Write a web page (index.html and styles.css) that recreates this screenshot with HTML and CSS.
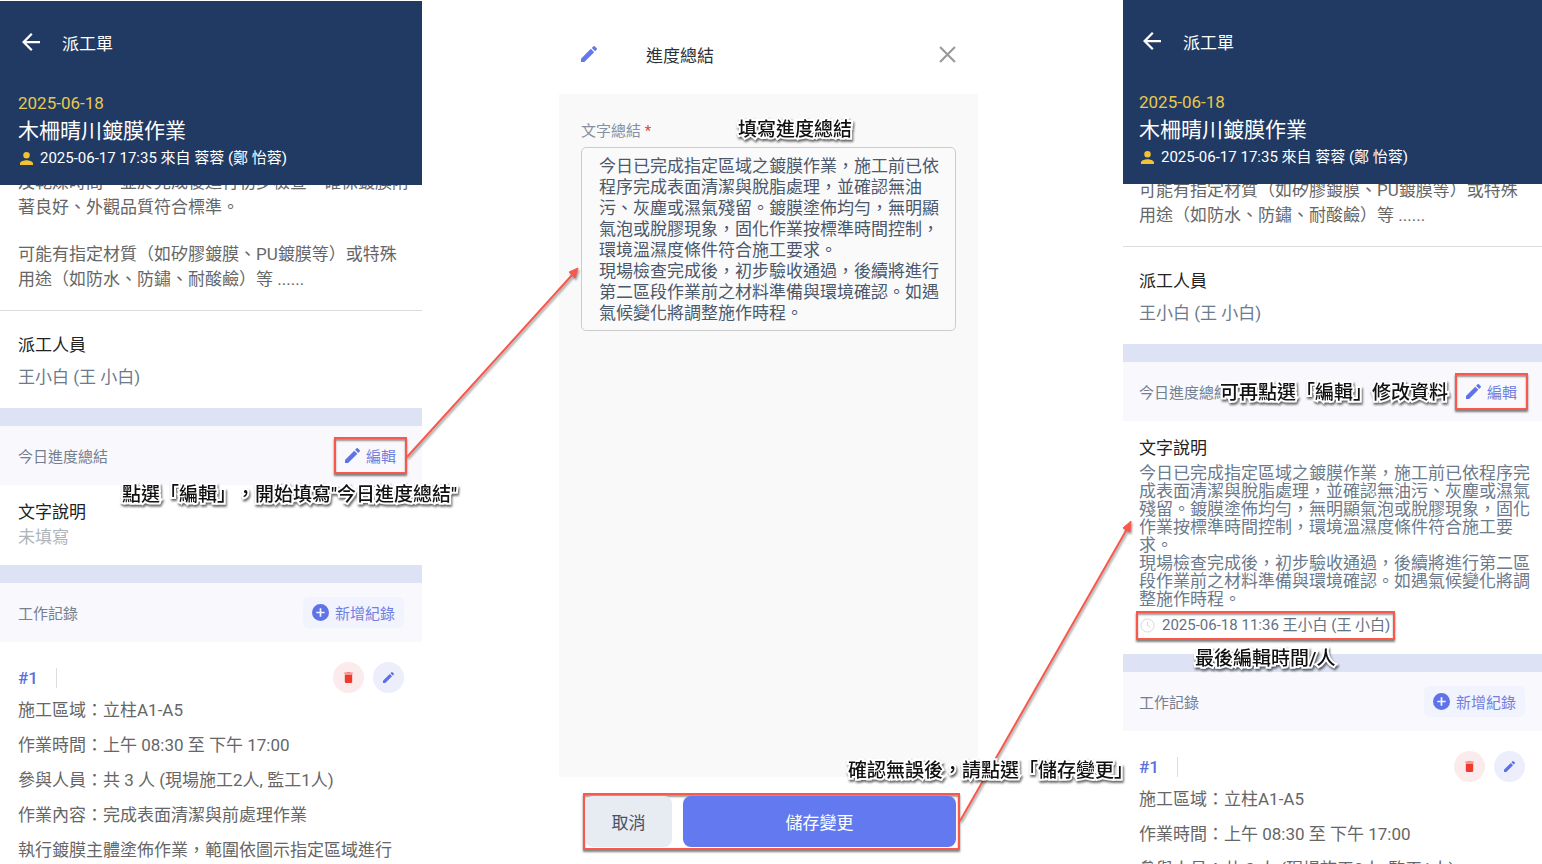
FILE: index.html
```html
<!DOCTYPE html>
<html lang="zh-Hant">
  <head>
    <meta charset="UTF-8" />
    <meta name="viewport" content="width=device-width, initial-scale=1.0" />
    <title>派工單</title>
    <link rel="stylesheet" href="styles.css" />
  </head>
  <body>
    <svg class="symbols" width="0" height="0">
      <symbol id="pencil" viewBox="3 3 18 18">
        <path d="M3 17.25V21h3.75L17.81 9.94l-3.75-3.75L3 17.25zM20.71 7.04a1 1 0 0 0 0-1.41l-2.34-2.34a1 1 0 0 0-1.41 0l-1.83 1.83 3.75 3.75 1.83-1.83z" />
      </symbol>
      <symbol id="back" viewBox="4 4 16 16">
        <path d="M20 11H7.83l5.59-5.59L12 4l-8 8 8 8 1.41-1.41L7.83 13H20v-2z" />
      </symbol>
      <symbol id="person" viewBox="4 4 16 16">
        <path d="M12 12a4 4 0 1 0 0-8 4 4 0 0 0 0 8zm0 2c-2.67 0-8 1.34-8 4v2h16v-2c0-2.66-5.33-4-8-4z" />
      </symbol>
      <symbol id="plus" viewBox="2 2 20 20">
        <path d="M12 2a10 10 0 1 0 0 20 10 10 0 0 0 0-20zm5 11h-4v4h-2v-4H7v-2h4V7h2v4h4v2z" />
      </symbol>
      <symbol id="trash" viewBox="5 3 14 18">
        <path d="M6 19a2 2 0 0 0 2 2h8a2 2 0 0 0 2-2V7H6v12z" />
        <path d="M19 4h-3.500l-1-1h-5l-1 1H5v2h14V4z" opacity=".6" />
      </symbol>
    </svg>

    <div class="container">
      <section class="phone phone-before">
        <header class="phone-header">
          <div class="nav">
            <button class="icon-button" aria-label="返回"><svg class="icon-back"><use href="#back" /></svg></button>
            <span>派工單</span>
          </div>
          <div class="date">2025-06-18</div>
          <h1>木柵晴川鍍膜作業</h1>
          <div class="author"><svg><use href="#person" /></svg>2025-06-17 17:35 來自 蓉蓉 (鄭 怡蓉)</div>
        </header>
        <div class="scroll">
          <div class="detail detail-before">
            <p>及乾燥時間，並於完成後進行初步檢查，確保鍍膜附著良好、外觀品質符合標準。</p>
            <p>可能有指定材質（如矽膠鍍膜、PU鍍膜等）或特殊用途（如防水、防鏽、耐酸鹼）等 ......</p>
          </div>
          <div class="staff">
            <h2>派工人員</h2>
            <p>王小白 (王 小白)</p>
          </div>
          <div class="section-title">
            <span>今日進度總結</span>
            <div class="marked marked-edit">
              <button class="soft-button"><svg><use href="#pencil" /></svg>編輯</button>
            </div>
          </div>
          <div class="summary">
            <h2>文字說明</h2>
            <p class="empty">未填寫</p>
          </div>
          <div class="section-title">
            <span>工作記錄</span>
            <button class="soft-button"><svg class="icon-plus"><use href="#plus" /></svg>新增紀錄</button>
          </div>
          <div class="record">
            <div class="record-head">
              <strong>#1</strong>
              <button class="round round-delete" aria-label="刪除"><svg><use href="#trash" /></svg></button>
              <button class="round round-edit" aria-label="編輯"><svg><use href="#pencil" /></svg></button>
            </div>
            <p>施工區域：立柱A1-A5</p>
            <p>作業時間：上午 08:30 至 下午 17:00</p>
            <p>參與人員：共 3 人 (現場施工2人, 監工1人)</p>
            <p>作業內容：完成表面清潔與前處理作業</p>
            <p>執行鍍膜主體塗佈作業，範圍依圖示指定區域進行</p>
          </div>
        </div>
      </section>

      <form class="modal">
        <header class="modal-header">
          <svg><use href="#pencil" /></svg>
          <h2>進度總結</h2>
          <button type="button" class="icon-button" aria-label="關閉">
            <svg viewBox="0 0 16 16"><path d="M1 1l14 14M15 1L1 15" /></svg>
          </button>
        </header>
        <div class="modal-body">
          <label for="summary">文字總結 <span>*</span></label>
          <textarea id="summary" rows="8">今日已完成指定區域之鍍膜作業，施工前已依程序完成表面清潔與脫脂處理，並確認無油污、灰塵或濕氣殘留。鍍膜塗佈均勻，無明顯氣泡或脫膠現象，固化作業按標準時間控制，環境溫濕度條件符合施工要求。
現場檢查完成後，初步驗收通過，後續將進行第二區段作業前之材料準備與環境確認。如遇氣候變化將調整施作時程。</textarea>
        </div>
        <footer class="modal-footer">
          <div class="marked marked-actions">
            <button type="button" class="cancel">取消</button>
            <button type="button" class="save">儲存變更</button>
          </div>
        </footer>
      </form>

      <section class="phone phone-after">
        <header class="phone-header">
          <div class="nav">
            <button class="icon-button" aria-label="返回"><svg class="icon-back"><use href="#back" /></svg></button>
            <span>派工單</span>
          </div>
          <div class="date">2025-06-18</div>
          <h1>木柵晴川鍍膜作業</h1>
          <div class="author"><svg><use href="#person" /></svg>2025-06-17 17:35 來自 蓉蓉 (鄭 怡蓉)</div>
        </header>
        <div class="scroll">
          <div class="detail detail-after">
            <p>可能有指定材質（如矽膠鍍膜、PU鍍膜等）或特殊用途（如防水、防鏽、耐酸鹼）等 ......</p>
          </div>
          <div class="staff">
            <h2>派工人員</h2>
            <p>王小白 (王 小白)</p>
          </div>
          <div class="section-title">
            <span>今日進度總結</span>
            <div class="marked marked-edit">
              <button class="soft-button"><svg><use href="#pencil" /></svg>編輯</button>
            </div>
          </div>
          <div class="summary">
            <h2>文字說明</h2>
            <p class="filled">今日已完成指定區域之鍍膜作業，施工前已依程序完成表面清潔與脫脂處理，並確認無油污、灰塵或濕氣殘留。鍍膜塗佈均勻，無明顯氣泡或脫膠現象，固化作業按標準時間控制，環境溫濕度條件符合施工要求。<br />現場檢查完成後，初步驗收通過，後續將進行第二區段作業前之材料準備與環境確認。如遇氣候變化將調整施作時程。</p>
            <div class="marked marked-time">
              <svg viewBox="0 0 16 16"><circle cx="8" cy="8" r="7" /><path d="M8 4v4l3 2" /></svg>
              2025-06-18 11:36 王小白 (王 小白)
            </div>
          </div>
          <div class="section-title">
            <span>工作記錄</span>
            <button class="soft-button"><svg class="icon-plus"><use href="#plus" /></svg>新增紀錄</button>
          </div>
          <div class="record">
            <div class="record-head">
              <strong>#1</strong>
              <button class="round round-delete" aria-label="刪除"><svg><use href="#trash" /></svg></button>
              <button class="round round-edit" aria-label="編輯"><svg><use href="#pencil" /></svg></button>
            </div>
            <p>施工區域：立柱A1-A5</p>
            <p>作業時間：上午 08:30 至 下午 17:00</p>
            <p>參與人員：共 3 人 (現場施工2人, 監工1人)</p>
          </div>
        </div>
      </section>

      <svg class="arrows" viewBox="0 0 1542 864" preserveAspectRatio="none">
        <path d="M407 457L573 274M960 821L1127 529" />
        <path class="head" d="M578 268l-3 10-6-6zM1131 521l-1 11-7-4z" />
      </svg>
      <div class="note note-edit">點選「編輯」，開始填寫"今日進度總結"</div>
      <div class="note note-fill">填寫進度總結</div>
      <div class="note note-save">確認無誤後，請點選「儲存變更」</div>
      <div class="note note-again">可再點選「編輯」修改資料</div>
      <div class="note note-time">最後編輯時間/人</div>
    </div>
  </body>
</html>
```

FILE: styles.css
```css
* {
  box-sizing: border-box;
}
body {
  margin: 0;
  background: #fff;
  color: #666;
  font-family: Roboto, "Noto Sans CJK TC", sans-serif;
  font-size: 17px;
}
h1,
h2,
p {
  margin: 0;
  font-weight: 400;
}
button {
  border: 0;
  padding: 0;
  font-family: inherit;
  cursor: pointer;
}
svg {
  display: block;
  fill: currentColor;
}
.symbols {
  position: absolute;
}
.container {
  position: relative;
  display: grid;
  grid-template-columns: 422fr 137fr 419fr 145fr 419fr;
  grid-template-rows: minmax(0, 1fr);
  height: 100vh;
  overflow: hidden;
}
.icon-button {
  background: none;
  color: inherit;
}

/* 派工單 */
.phone {
  display: flex;
  flex-direction: column;
  min-width: 0;
  min-height: 0;
}
.phone-before {
  grid-column: 1;
  padding-top: 1px;
}
.phone-after {
  grid-column: 5;
}
.phone-header {
  flex-shrink: 0;
  padding: 29px 18px 14px;
  background: #203a64;
  color: #fff;
}
.phone-after .phone-header,
.phone-after .detail,
.phone-after .staff,
.phone-after .summary,
.phone-after .record,
.phone-after .section-title {
  padding-left: 16px;
}
.nav {
  display: flex;
  align-items: center;
  gap: 22px;
  height: 24px;
  margin-bottom: 36px;
  padding-left: 4px;
}
.icon-back {
  width: 18px;
  height: 18px;
}
.date {
  color: #e8c84d;
  line-height: 26px;
}
.phone-header h1 {
  font-size: 21px;
  line-height: 30px;
}
.author {
  display: flex;
  align-items: center;
  gap: 7px;
  padding-left: 2px;
  font-size: 15px;
  line-height: 25px;
}
.author svg {
  width: 13px;
  height: 13px;
  color: #f2c230;
}
.scroll {
  flex: 1;
  min-height: 0;
  overflow: hidden;
}
.detail {
  padding: 0 12px 18px 18px;
  border-bottom: 1px solid #ddd;
  line-height: 25px;
}
.detail p + p {
  margin-top: 22px;
}
.detail-before {
  margin-top: -15px;
}
.detail-after {
  margin-top: -6px;
}
.staff {
  padding: 22px 18px 19px;
  line-height: 24px;
}
.staff h2,
.summary h2 {
  color: #222;
  font-size: 17px;
}
.staff p {
  margin-top: 8px;
  color: #6b7a8c;
}
.section-title {
  display: flex;
  align-items: center;
  justify-content: space-between;
  height: 77px;
  padding: 0 18px;
  border-top: 18px solid #dde3f5;
  background: #f8f8fd;
  color: #758091;
  font-size: 15px;
}
.soft-button {
  display: flex;
  align-items: center;
  gap: 6px;
  height: 31px;
  padding: 0 9px;
  border-radius: 6px;
  background: #f1f3fe;
  color: #7180dd;
  font-size: 15px;
}
.soft-button svg {
  width: 15px;
  height: 15px;
  color: #5f73e8;
}
.soft-button .icon-plus {
  width: 17px;
  height: 17px;
}
.summary {
  padding: 15px 11px 15px 18px;
  line-height: 25px;
}
.summary .empty {
  color: #aeb4bb;
}
.summary .filled {
  margin-top: 3px;
  color: #6b7a8c;
  line-height: 18px;
}
.record {
  padding: 20px 18px 0;
}
.record p {
  line-height: 35px;
  white-space: nowrap;
}
.record-head {
  display: flex;
  align-items: center;
  gap: 9px;
}
.record-head strong {
  margin-right: auto;
  padding-right: 18px;
  border-right: 1px solid #ddd;
  color: #5a70e0;
  font-weight: 500;
}
.round {
  display: grid;
  place-items: center;
  width: 31px;
  height: 31px;
  border-radius: 50%;
}
.round svg {
  width: 11px;
  height: 11px;
}
.round-delete {
  background: #fbebec;
  color: #f03a2e;
}
.round-edit {
  background: #eceefc;
  color: #5a70e8;
}
.phone-after .record,
.phone-after .section-title {
  padding-right: 17px;
}

/* 進度總結 */
.modal {
  grid-column: 3;
  display: flex;
  flex-direction: column;
  min-width: 0;
  min-height: 0;
}
.modal-header {
  display: flex;
  align-items: center;
  height: 94px;
  padding: 14px 22px 0;
}
.modal-header > svg {
  width: 16px;
  height: 16px;
  color: #6478ea;
}
.modal-header h2 {
  flex: 1;
  padding-left: 49px;
  color: #2b303a;
  font-size: 17px;
}
.modal-header .icon-button svg {
  width: 17px;
  height: 17px;
  fill: none;
  stroke: #999;
  stroke-width: 2;
}
.modal-body {
  flex: 1;
  padding: 24px 22px;
  background: #f9f9fa;
}
.modal-body label {
  display: block;
  margin-bottom: 3px;
  color: #8790a0;
  font-size: 15px;
  line-height: 26px;
}
.modal-body label span {
  color: #e0443e;
}
.modal-body textarea {
  display: block;
  width: 100%;
  padding: 8px 10px 6px 17px;
  border: 1px solid #ccc;
  border-radius: 5px;
  background: #fafafb;
  color: #4b586b;
  font-family: inherit;
  font-size: 17px;
  line-height: 21px;
  overflow: hidden;
  resize: none;
}
.modal-footer {
  padding: 16px 18px 14px 24px;
}
.modal-footer button {
  height: 51px;
  border-radius: 8px;
  font-size: 17px;
}
.modal-footer .cancel {
  flex: 0 0 87px;
  background: #e7ebf2;
  color: #465266;
}
.modal-footer .save {
  flex: 1;
  background: #6379ef;
  color: #fff;
}

/* 標註 */
.marked {
  border: 2px solid #f9584a;
  box-shadow: 0 2px 2px rgba(0, 0, 0, 0.5), inset 0 2px 2px rgba(0, 0, 0, 0.4);
}
.marked-edit {
  margin-right: -3px;
  padding: 1px 0;
}
.marked-edit .soft-button {
  background: none;
}
.marked-actions {
  display: flex;
  gap: 11px;
  padding: 1px 2px 1px 0;
}
.marked-time {
  display: flex;
  align-items: center;
  gap: 7px;
  width: max-content;
  height: 29px;
  margin: 3px 0 -1px -3px;
  padding: 0 3px 0 2px;
  color: #65717f;
  font-size: 15px;
}
.marked-time svg {
  width: 15px;
  height: 15px;
  fill: none;
  stroke: #d5d8dc;
}
.arrows {
  position: absolute;
  inset: 0;
  width: 100%;
  height: 864px;
  fill: none;
  stroke: #f9584a;
  stroke-width: 2;
  filter: drop-shadow(1px 2px 1px rgba(0, 0, 0, 0.4));
  pointer-events: none;
}
.arrows .head {
  fill: #f9584a;
  stroke-width: 1;
}
.note {
  position: absolute;
  color: #111;
  font-size: 19px;
  font-weight: 500;
  line-height: 28px;
  white-space: nowrap;
  text-spacing-trim: space-all;
  -webkit-text-stroke: 4px #fff;
  paint-order: stroke fill;
  filter: drop-shadow(1px 2px 1px rgba(0, 0, 0, 0.6));
}
.note-edit {
  left: 122px;
  top: 481px;
}
.note-fill {
  left: 738px;
  top: 116px;
}
.note-save {
  left: 848px;
  top: 757px;
}
.note-again {
  left: 1220px;
  top: 379px;
}
.note-time {
  left: 1195px;
  top: 645px;
}
```
